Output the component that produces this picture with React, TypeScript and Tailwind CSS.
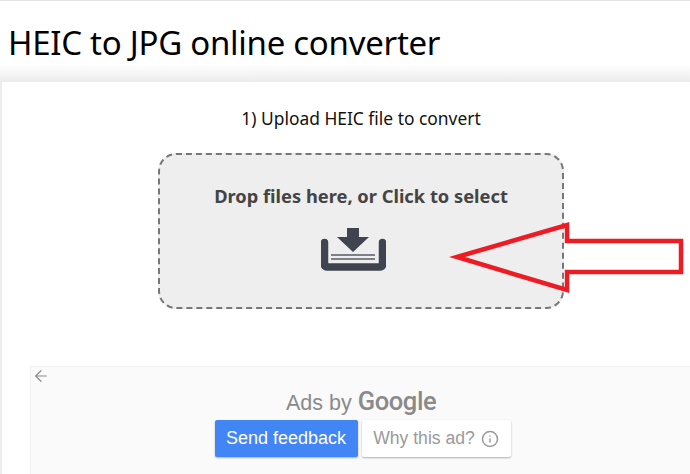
import React from 'react';
import { ArrowLeft, Info } from 'lucide-react';

const DownloadTray = () => (
  <svg width="65" height="43" viewBox="0 0 65 43" className="block">
    <path d="M26 0h12v9h10L32 24 16 9h10z" fill="#3f4450" />
    <path d="M3.5 14.5V37a2 2 0 0 0 2 2h54a2 2 0 0 0 2-2V14.5" fill="none" stroke="#3f4450" strokeWidth="7.5" strokeLinecap="round" />
    <rect x="10" y="26" width="44" height="2" fill="#7d808a" />
    <rect x="10" y="30" width="44" height="2" fill="#7d808a" />
  </svg>
);

export default function App() {
  return (
    <div className="relative h-[474px] w-[690px] overflow-hidden bg-white font-['Noto_Sans',sans-serif]">
      <div className="h-px bg-[#e4e4e4]" />
      <h1 className="ml-2 mt-[20px] h-[44px] text-[33px] leading-[44px] tracking-[-0.27px] text-black">
        HEIC to JPG online converter
      </h1>
      <div className="h-[17px] bg-gradient-to-b from-white to-[#ebebeb]" />

      <div className="h-[392px] bg-[#ececec] pl-[2px]">
        <div className="h-full w-[718px] bg-white pt-px">
          <p className="mt-[22px] text-center text-[17.4px] leading-[26px] text-[#111]">
            1) Upload HEIC file to convert
          </p>
          <div className="mx-auto mt-[22px] flex h-[156px] w-[406px] flex-col items-center rounded-[18px] border-2 border-dashed border-[#777] bg-[#eeeeee]">
            <p className="mt-[28px] text-[18.3px] font-bold leading-[26px] text-[#444]">
              Drop files here, or Click to select
            </p>
            <div className="mr-[16px] mt-[19px]">
              <DownloadTray />
            </div>
          </div>

          <div className="ml-[28px] mt-[57px] flex h-[120px] w-[660px] flex-col items-center border-l border-t border-[#f1f1f1] bg-[#fafafa]">
            <div className="flex h-[53px] w-full items-start">
              <ArrowLeft className="ml-px h-[18px] w-[18px] text-[#8a8a8a]" strokeWidth={1.6} />
              <p className="ml-[236px] mt-[20px] flex items-baseline gap-[6px] font-['Liberation_Sans',sans-serif] text-[21.5px] leading-[28px] text-[#8a8a8a]">
                Ads by
                <span className="font-['Roboto',sans-serif] text-[25.5px] font-medium tracking-[-0.4px] text-[#8a8a8a]">Google</span>
              </p>
            </div>
            <div className="flex items-stretch gap-[4px] pl-[4px] font-['Liberation_Sans',sans-serif]">
              <button className="h-[37px] w-[143px] rounded-[2px] bg-[#4285f4] text-[18px] text-white shadow-[0_1px_2px_rgba(0,0,0,0.3)]">
                Send feedback
              </button>
              <button className="flex h-[37px] w-[149px] items-center justify-center gap-[6px] rounded-[2px] bg-white text-[17.6px] text-[#9a9a9a] shadow-[0_1px_2px_rgba(0,0,0,0.3)]">
                Why this ad?
                <Info className="h-[18px] w-[18px]" strokeWidth={2} />
              </button>
            </div>
          </div>
        </div>
      </div>

      {/* red arrow drawn on top of the screenshot */}
      <svg width="690" height="474" className="pointer-events-none absolute left-0 top-0">
        <path d="M568 243H679V270H568Z" fill="white" />
        <path
          d="M457 257L567 225V241H681V272H567V290Z"
          fill="none"
          stroke="#ed1c24"
          strokeWidth="4.5"
          strokeLinejoin="miter"
        />
      </svg>
    </div>
  );
}
